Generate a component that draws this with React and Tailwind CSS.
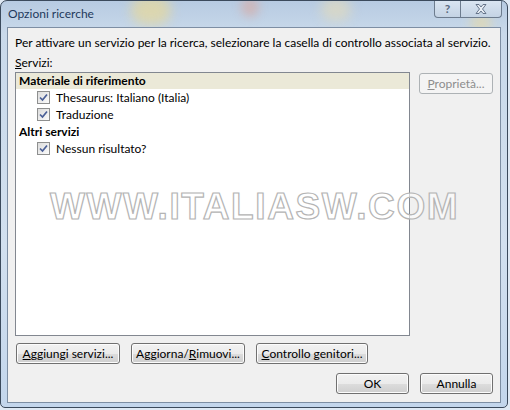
import React from "react";

const font = { fontFamily: 'Lato, "Noto Sans", "Liberation Sans", sans-serif' };

function Btn({ children, className = "", disabled = false }) {
  return (
    <div
      className={
        "flex items-center justify-center rounded-[3px] border text-[12px] leading-none " +
        (disabled
          ? "border-[#adb2b5] bg-[#f4f4f4] text-[#8d8d8d] "
          : "border-[#707070] bg-[linear-gradient(#f2f2f2_0%,#ebebeb_50%,#dddddd_51%,#cfcfcf_100%)] text-black shadow-[inset_0_0_0_1px_#fcfcfc] ") +
        className
      }
    >
      {children}
    </div>
  );
}

function Check({ label }) {
  return (
    <div className="flex h-[17px] items-center pl-[21px]">
      <div className="flex h-[13px] w-[13px] items-center justify-center border border-[#8e8f8f] bg-[linear-gradient(135deg,#dcdcdc,#fbfbfb)]">
        <svg width="9" height="9" viewBox="0 0 9 9">
          <path d="M1 4.5 L3.5 7 L8 1.5" fill="none" stroke="#4a5f97" strokeWidth="1.7" />
        </svg>
      </div>
      <span className="ml-[6px] text-[12px] text-black">{label}</span>
    </div>
  );
}

export default function App() {
  return (
    <div
      className="relative h-[410px] w-[510px] overflow-hidden bg-[#dfe9f4]"
      style={font}
    >
      <div className="relative h-[408px] w-[508px] overflow-hidden rounded-t-[7px] rounded-b-[5px] border border-[#3b4a5c] bg-[linear-gradient(180deg,#b7cbe2_0%,#c9d9ea_8%,#d2e0ef_60%,#c3d6ec_100%)]">
        {/* blurred aero shapes */}
        <div className="absolute left-[130px] top-[-6px] h-[30px] w-[40px] rounded-full bg-[#e8d99a] opacity-70 blur-[6px]" />
        <div className="absolute left-[240px] top-[-4px] h-[20px] w-[18px] rounded-full bg-[#d9a8a0] opacity-60 blur-[5px]" />
        <div className="absolute left-[320px] top-[-4px] h-[24px] w-[30px] rounded-full bg-[#e6dcb8] opacity-60 blur-[6px]" />
        <div className="absolute left-[470px] top-[10px] h-[24px] w-[20px] rounded-full bg-[#ead9a0] opacity-60 blur-[6px]" />

        {/* title bar */}
        <div className="relative flex h-[26px] items-center pl-[7px]">
          <span className="text-[12px] text-[#1e395b]">Opzioni ricerche</span>
          <div className="absolute right-[5px] top-[-1px] flex h-[18px] overflow-hidden rounded-b-[4px] border border-t-0 border-[#6d7c8e] bg-[linear-gradient(#dbe6f2,#c4d3e4)]">
            <div className="flex w-[26px] items-center justify-center border-r border-[#6d7c8e] text-[12px] font-bold text-[#5a6a80]">?</div>
            <div className="flex w-[40px] items-center justify-center">
              <svg width="12" height="10" viewBox="0 0 12 10">
                <path d="M1 0.5 L4 0.5 L6 3 L8 0.5 L11 0.5 L7.5 5 L11 9.5 L8 9.5 L6 7 L4 9.5 L1 9.5 L4.5 5 Z" fill="#e8eef5" stroke="#5a6a80" strokeWidth="0.9" />
              </svg>
            </div>
          </div>
        </div>

        {/* content */}
        <div className="relative mx-[6px] h-[376px] border border-[#7d8ea3] bg-[#f0f0f0] px-[7px]">
          <div className="whitespace-nowrap pt-[7px] text-[12px] leading-[16px] text-black">
            Per attivare un servizio per la ricerca, selezionare la casella di controllo associata al servizio.
          </div>
          <div className="mt-[4px] text-[12px] leading-[16px] text-black">
            <span className="underline">S</span>ervizi:
          </div>
          <div className="mt-[1px] flex">
            <div className="h-[264px] w-[397px] border border-[#828790] bg-white">
              <div className="flex h-[16px] items-center bg-[#ebe9d8] pl-[3px] text-[12px] font-bold text-black">
                Materiale di riferimento
              </div>
              <Check label="Thesaurus: Italiano (Italia)" />
              <Check label="Traduzione" />
              <div className="flex h-[17px] items-center pl-[3px] text-[12px] font-bold text-black">Altri servizi</div>
              <Check label="Nessun risultato?" />
            </div>
            <div className="ml-[9px] pt-[1px]">
              <Btn disabled className="h-[21px] w-[74px]">
                <span><span className="underline">P</span>roprietà...</span>
              </Btn>
            </div>
          </div>
          <div className="mt-[7px] flex gap-[11px] pl-[1px]">
            <Btn className="h-[21px] w-[104px]">
              <span><span className="underline">A</span>ggiungi servizi...</span>
            </Btn>
            <Btn className="h-[21px] w-[114px]">
              <span>Aggiorna/<span className="underline">R</span>imuovi...</span>
            </Btn>
            <Btn className="h-[21px] w-[112px]">
              <span><span className="underline">C</span>ontrollo genitori...</span>
            </Btn>
          </div>
          <div className="mt-[9px] flex justify-end gap-[11px] pr-[0px]">
            <Btn className="h-[21px] w-[73px]">OK</Btn>
            <Btn className="h-[21px] w-[73px]">Annulla</Btn>
          </div>

          {/* watermark */}
          <div
            className="pointer-events-none absolute left-[42px] top-[160px] whitespace-nowrap text-[37px] font-bold leading-none tracking-[1.6px] text-[rgba(255,255,255,0.6)] [-webkit-text-stroke:1.2px_#b4b4b4]"
            style={{ fontFamily: '"Liberation Sans", Arial, sans-serif' }}
          >
            WWW.ITALIASW.COM
          </div>
        </div>
      </div>
    </div>
  );
}
